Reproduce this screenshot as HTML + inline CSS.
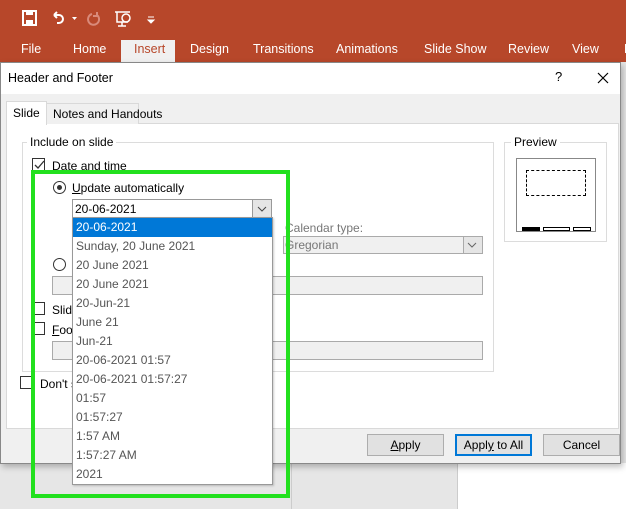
<!DOCTYPE html>
<html><head><meta charset="utf-8"><style>
*{margin:0;padding:0;box-sizing:border-box}
body{width:626px;height:509px;overflow:hidden;position:relative;background:#e6e6e6;font-family:"Liberation Sans",sans-serif;font-size:12px;color:#000}
.a{position:absolute}
.tab{position:absolute;top:42px;color:#fff;font-size:12.5px;white-space:nowrap}
.cb{position:absolute;width:13px;height:13px;border:1px solid #333;background:#fff}
.rd{position:absolute;width:13px;height:13px;border:1px solid #333;border-radius:50%;background:#fff}
.t{position:absolute;white-space:nowrap}
.btn{position:absolute;top:434px;height:22px;border:1px solid #adadad;background:#e1e1e1;text-align:center;line-height:20px;font-size:12px}
.li{height:19px;line-height:19px;padding-left:3px;color:#555;font-size:12px;white-space:nowrap}
</style></head><body>
<div class="a" style="left:0;top:0;width:626px;height:62px;background:#b7472a"></div>
<svg class="a" style="left:18px;top:8px" width="140" height="20">
<rect x="5" y="3" width="13" height="14" fill="none" stroke="#fff" stroke-width="2"/><rect x="8" y="3" width="7" height="4" fill="#fff"/><rect x="8" y="12" width="7" height="5" fill="#fff"/>
<path d="M36 7 h5 a4 4 0 0 1 0 8 h-2 M36 7 l3 -3 M36 7 l3 3" fill="none" stroke="#fff" stroke-width="2"/>
<path d="M54 9 l5 0 l-2.5 3z" fill="#fff"/>
<path d="M74 6 a5.5 5.5 0 1 0 5 1 M79 4 v4 h-4" fill="none" stroke="#d98a7a" stroke-width="2"/>
<path d="M97 4 h15 M99 4 v10 h11 M104 14 v4 M100 18 h8" fill="none" stroke="#fff" stroke-width="1.5"/><circle cx="108" cy="10" r="4" fill="none" stroke="#fff" stroke-width="1.5"/>
<path d="M130 9 h6 M130 12 l3 3 l3 -3z" fill="#fff" stroke="#fff"/>
</svg>
<div class="a" style="left:121px;top:40px;width:54px;height:22px;background:#f0f0f0"></div>
<div class="tab" style="left:21px">File</div>
<div class="tab" style="left:73px">Home</div>
<div class="tab" style="left:134px;color:#b7472a">Insert</div>
<div class="tab" style="left:190px">Design</div>
<div class="tab" style="left:253px">Transitions</div>
<div class="tab" style="left:336px">Animations</div>
<div class="tab" style="left:424px">Slide Show</div>
<div class="tab" style="left:508px">Review</div>
<div class="tab" style="left:572px">View</div>
<div class="tab" style="left:624px">H</div>
<div class="a" style="left:291px;top:463px;width:1px;height:46px;background:#ccc"></div>
<div class="a" style="left:457px;top:463px;width:169px;height:46px;background:#fff;border-left:1px solid #ccc"></div>
<div class="a" style="left:0;top:62px;width:621px;height:402px;background:#f0f0f0;border:1px solid #888;box-shadow:2px 3px 6px rgba(0,0,0,.25)"></div>
<div class="a" style="left:1px;top:63px;width:619px;height:31px;background:#fff"></div>
<div class="t" style="left:8px;top:71px;font-size:12.5px">Header and Footer</div>
<div class="t" style="left:555px;top:69px;font-size:13px">?</div>
<svg class="a" style="left:597px;top:72px" width="12" height="12"><path d="M1 1L11 11M11 1L1 11" stroke="#000" stroke-width="1.2"/></svg>
<div class="a" style="left:6px;top:123px;width:613px;height:306px;background:#fff;border:1px solid #d9d9d9"></div>
<div class="a" style="left:46px;top:103px;width:93px;height:21px;background:#f0f0f0;border:1px solid #d9d9d9;border-bottom:none"></div>
<div class="t" style="left:53px;top:107px">Notes and Handouts</div>
<div class="a" style="left:6px;top:101px;width:41px;height:24px;background:#fff;border:1px solid #d9d9d9;border-bottom:none"></div>
<div class="t" style="left:13px;top:106px">Slide</div>
<div class="a" style="left:22px;top:142px;width:472px;height:230px;border:1px solid #dcdcdc"></div>
<div class="t" style="left:27px;top:135px;background:#fff;padding:0 3px">Include on slide</div>
<div class="cb" style="left:32px;top:158px"></div>
<svg class="a" style="left:33px;top:159px" width="12" height="12"><path d="M2 6l3 3 6-7" fill="none" stroke="#333" stroke-width="1.3"/></svg>
<div class="t" style="left:52px;top:159px"><u>D</u>ate and time</div>
<div class="rd" style="left:53px;top:181px"></div><div class="a" style="left:57px;top:185px;width:5px;height:5px;border-radius:50%;background:#333"></div>
<div class="t" style="left:72px;top:181px"><u>U</u>pdate automatically</div>
<div class="rd" style="left:53px;top:258px"></div>
<div class="t" style="left:285px;top:221px;color:#777">Calendar type:</div>
<div class="a" style="left:283px;top:236px;width:200px;height:18px;background:#f0f0f0;border:1px solid #aaa"></div>
<div class="t" style="left:285px;top:238px;color:#777">Gregorian</div>
<div class="a" style="left:463px;top:237px;width:19px;height:16px;background:#e5e5e5;border-left:1px solid #aaa"></div>
<svg class="a" style="left:467px;top:241px" width="10" height="8"><path d="M1 2l4 4 4-4" fill="none" stroke="#666"/></svg>
<div class="a" style="left:52px;top:276px;width:431px;height:19px;background:#f0f0f0;border:1px solid #aaa"></div>
<div class="cb" style="left:32px;top:302px"></div><div class="t" style="left:52px;top:303px">Slide number</div>
<div class="cb" style="left:32px;top:322px"></div><div class="t" style="left:52px;top:323px"><u>F</u>ooter</div>
<div class="a" style="left:52px;top:341px;width:431px;height:19px;background:#f0f0f0;border:1px solid #aaa"></div>
<div class="cb" style="left:20px;top:376px"></div><div class="t" style="left:40px;top:377px">Don't show on title slide</div>
<div class="a" style="left:504px;top:142px;width:103px;height:100px;border:1px solid #dcdcdc"></div>
<div class="t" style="left:511px;top:135px;background:#fff;padding:0 3px">Preview</div>
<div class="a" style="left:516px;top:158px;width:80px;height:74px;border:1px solid #888"></div>
<div class="a" style="left:526px;top:170px;width:60px;height:26px;border:1px dashed #000"></div>
<div class="a" style="left:522px;top:227px;width:18px;height:4px;background:#000"></div>
<div class="a" style="left:543px;top:227px;width:27px;height:4px;border:1px solid #000"></div>
<div class="a" style="left:573px;top:227px;width:18px;height:4px;border:1px solid #000"></div>
<div class="btn" style="left:367px;width:77px"><u>A</u>pply</div>
<div class="btn" style="left:455px;width:77px;border:2px solid #0078d7;line-height:18px">Appl<u>y</u> to All</div>
<div class="btn" style="left:543px;width:77px">Cancel</div>
<div class="a" style="left:72px;top:199px;width:200px;height:19px;background:#fff;border:1px solid #999"></div>
<div class="t" style="left:75px;top:202px">20-06-2021</div>
<div class="a" style="left:252px;top:200px;width:19px;height:17px;background:#e5e5e5;border-left:1px solid #999"></div>
<svg class="a" style="left:257px;top:205px" width="10" height="8"><path d="M1 2l4 4 4-4" fill="none" stroke="#444"/></svg>
<div class="a" style="left:72px;top:217px;width:201px;height:268px;background:#fff;border:1px solid #999;box-shadow:1px 1px 2px rgba(0,0,0,.2)">
<div class="li" style="background:#0078d7;color:#fff">20-06-2021</div>
<div class="li">Sunday, 20 June 2021</div>
<div class="li">20 June 2021</div>
<div class="li">20 June 2021</div>
<div class="li">20-Jun-21</div>
<div class="li">June 21</div>
<div class="li">Jun-21</div>
<div class="li">20-06-2021 01:57</div>
<div class="li">20-06-2021 01:57:27</div>
<div class="li">01:57</div>
<div class="li">01:57:27</div>
<div class="li">1:57 AM</div>
<div class="li">1:57:27 AM</div>
<div class="li">2021</div>
</div>
<div class="a" style="left:31px;top:170px;width:259px;height:328px;border:4px solid #22e01e"></div>
</body></html>
